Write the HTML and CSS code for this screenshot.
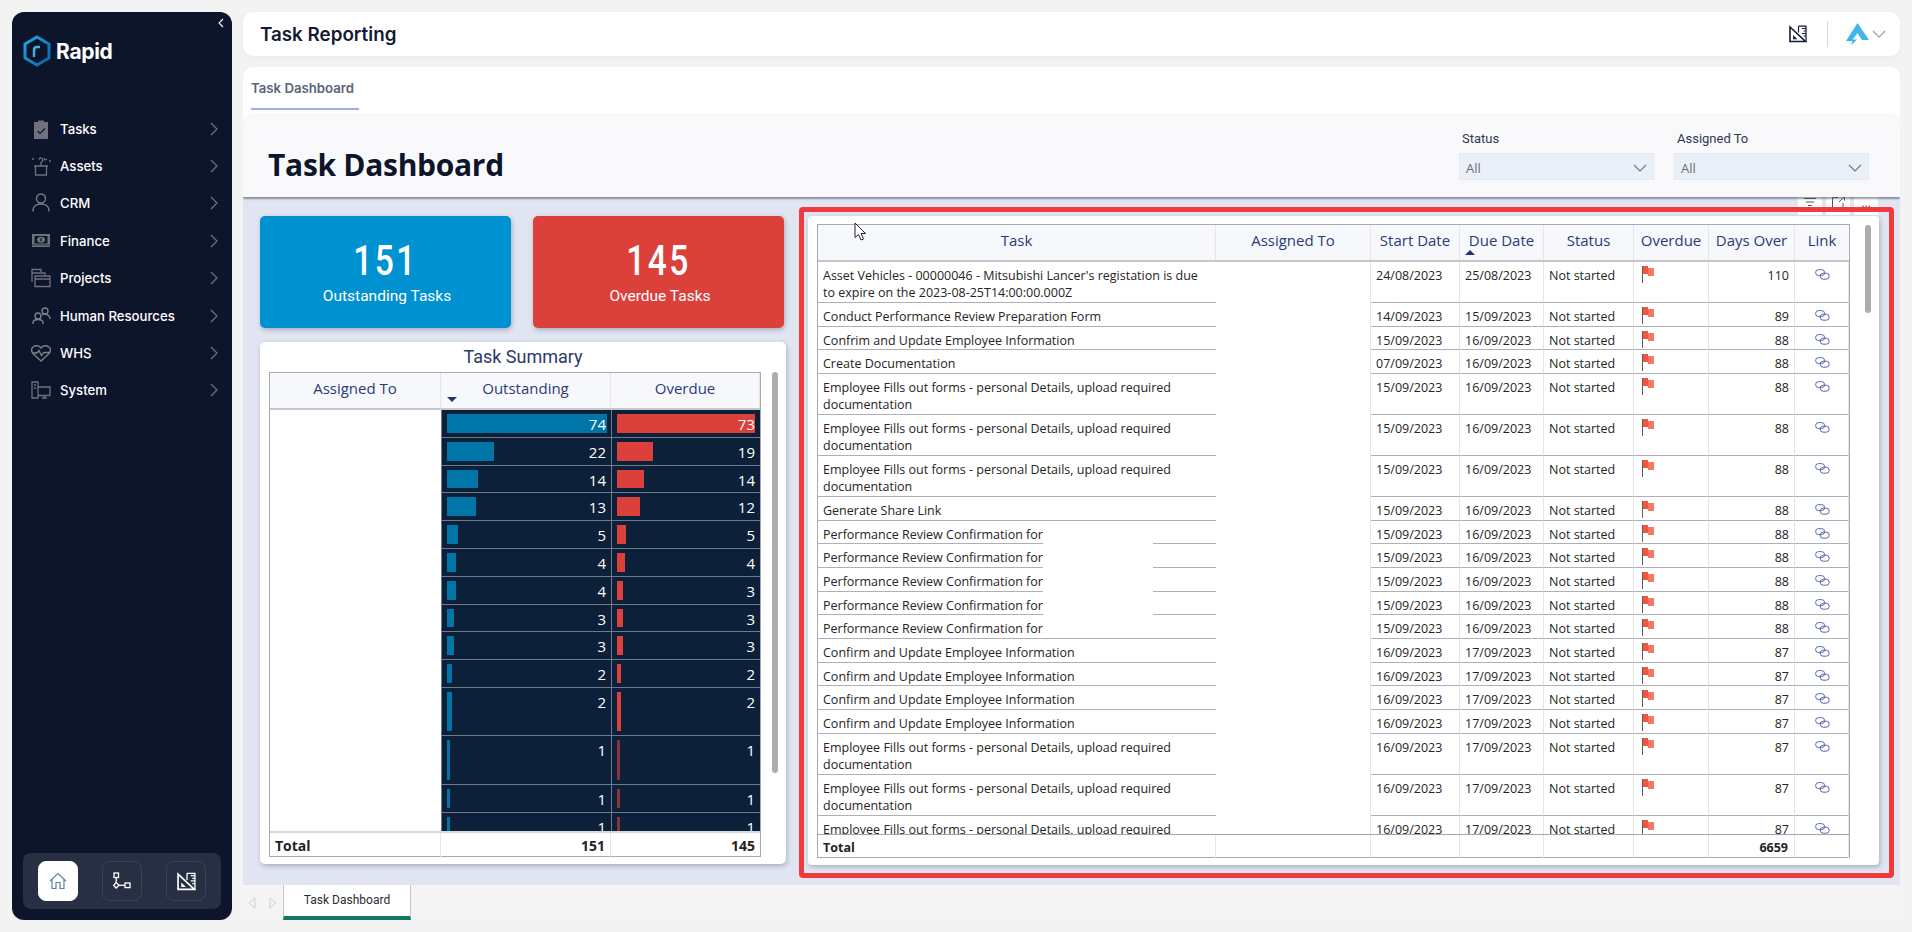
FILE: index.html
```html
<!DOCTYPE html>
<html lang="en">
<head>
    <meta charset="UTF-8">
    <meta name="viewport" content="width=device-width, initial-scale=1.0">
    <title>Task Reporting</title>
    <link rel="stylesheet" href="styles.css">
</head>
<body>

    <!-- Shared icons -->
    <svg class="defs" width="0" height="0">
        <symbol id="ruler" viewBox="0 0 18 18">
            <path d="M1 2 L16.5 16.5 H1 Z" fill="none" stroke="currentColor" stroke-width="1.6"/>
            <path d="M4 10 L8.5 14.3 H4 Z" fill="currentColor"/>
            <path d="M9.5 1.2 H17 V17 M9.5 1.2 V7.5 M13 3.5 h4 M14.5 6 h2.5 M13 8.5 h4 M14.5 11 h2.5" fill="none" stroke="currentColor" stroke-width="1.2"/>
        </symbol>
        <symbol id="flag" viewBox="0 0 12 17">
            <path d="M.5 0 V17" stroke="#5c5f66" stroke-width="1"/>
            <path d="M1 0 H6 V2 H12 V10 H6 V8 H1 Z" fill="#f4553f"/>
            <path d="M6 2 H12 V10 H6 Z" fill="#f8785f"/>
        </symbol>
        <symbol id="link" viewBox="0 0 15 11">
            <rect x=".6" y=".6" width="9" height="6" rx="3" fill="none" stroke="#4a57a3" stroke-width=".9"/>
            <rect x="5.2" y="4.2" width="9" height="6" rx="3" fill="none" stroke="#4a57a3" stroke-width=".9"/>
        </symbol>
        <symbol id="chevron" viewBox="0 0 8 14">
            <path d="M1 1 L7 7 L1 13" fill="none" stroke="currentColor" stroke-width="1.2"/>
        </symbol>
        <symbol id="caret" viewBox="0 0 14 8">
            <path d="M1 1 L7 7 L13 1" fill="none" stroke="currentColor" stroke-width="1.1"/>
        </symbol>
    </svg>

    <div class="app">

        <!-- Sidebar -->
        <aside class="sidebar">
            <svg class="collapse" width="6" height="10" viewBox="0 0 6 10"><path d="M5 1 L1 5 L5 9" fill="none" stroke="#fff" stroke-width="1.1"/></svg>
            <div class="brand">
                <svg width="28" height="32" viewBox="0 0 28 32">
                    <defs>
                        <linearGradient id="hex" x1="0" y1="0" x2="1" y2="1">
                            <stop offset="0" stop-color="#25a8e0"/>
                            <stop offset="1" stop-color="#0b62ae"/>
                        </linearGradient>
                    </defs>
                    <path d="M14 2 L26 9 V23 L14 30 L2 23 V9 Z" fill="none" stroke="url(#hex)" stroke-width="3"/>
                    <path d="M11 22 V15 Q11 12 14 12 H17" fill="none" stroke="#3cb4e6" stroke-width="2.4"/>
                </svg>
                <span>Rapid</span>
            </div>

            <nav class="menu">
                <a class="menu-item" href="#">
                    <svg class="menu-icon" viewBox="0 0 20 20"><path d="M3 3 H7 V1.5 H13 V3 H17 V20 H3 Z" fill="#6e727e"/><path d="M6.5 12 L9 14.5 L14 9.5" fill="none" stroke="#0d152b" stroke-width="1.2"/></svg>
                    <span>Tasks</span>
                    <svg class="menu-arrow"><use href="#chevron"/></svg>
                </a>
                <a class="menu-item" href="#">
                    <svg class="menu-icon" viewBox="0 0 20 20"><g fill="none" stroke="#6e727e" stroke-width="1.3"><path d="M3 10 H17 M4.5 10 V19 H15.5 V10"/><path d="M10 10 V6 M8 3.5 a2 2 0 1 1 2 2.5 M13 2 l1 2 2-1"/></g><path d="M1 3 h2 M18 5 h2" stroke="#6e727e" stroke-width="1.3"/></svg>
                    <span>Assets</span>
                    <svg class="menu-arrow"><use href="#chevron"/></svg>
                </a>
                <a class="menu-item" href="#">
                    <svg class="menu-icon" viewBox="0 0 20 20"><g fill="none" stroke="#7b7f8a" stroke-width="1.4"><circle cx="10" cy="5.5" r="4.5"/><path d="M2 18.5 V17 C2 13 6 11 10 11 S18 13 18 17 V18.5"/></g></svg>
                    <span>CRM</span>
                    <svg class="menu-arrow"><use href="#chevron"/></svg>
                </a>
                <a class="menu-item" href="#">
                    <svg class="menu-icon" viewBox="0 0 20 20"><path d="M1 3 H19 V16 H1 Z" fill="#6e727e"/><path d="M3.5 5 H16.5 V12.5 H3.5 Z" fill="#0d152b"/><ellipse cx="10" cy="8.7" rx="4" ry="3" fill="#6e727e"/><path d="M10 7 V10.5" stroke="#0d152b" stroke-width="1.2"/><path d="M1 14 H19" stroke="#0d152b" stroke-width=".7"/></svg>
                    <span>Finance</span>
                    <svg class="menu-arrow"><use href="#chevron"/></svg>
                </a>
                <a class="menu-item" href="#">
                    <svg class="menu-icon" viewBox="0 0 20 20"><g fill="none" stroke="#6e727e" stroke-width="1.3"><path d="M1 14 V1.5 H10 V4 M1 5 H14 V7"/><path d="M4 8 H19 V18.5 H4 Z M4 11 H19"/></g></svg>
                    <span>Projects</span>
                    <svg class="menu-arrow"><use href="#chevron"/></svg>
                </a>
                <a class="menu-item" href="#">
                    <svg class="menu-icon" viewBox="0 0 20 20"><g fill="none" stroke="#7b7f8a" stroke-width="1.4"><circle cx="14" cy="5" r="3"/><circle cx="7" cy="10" r="3"/><path d="M2 18 V17 C2 14.5 4 13.5 7 13.5 S12 14.5 12 17 V18"/><path d="M11 8.5 C12 8 16 8 18 10 C19 11 19 12 19 13"/></g></svg>
                    <span>Human Resources</span>
                    <svg class="menu-arrow"><use href="#chevron"/></svg>
                </a>
                <a class="menu-item" href="#">
                    <svg class="menu-icon" viewBox="0 0 20 20"><path d="M10 18 L2.5 11 C0 8.5 0 5.5 2 4 C4.500 2 8 2.500 10 5 C12 2.500 15.500 2 18 4 C20 5.500 20 8.500 17.500 11 Z" fill="none" stroke="#7b7f8a" stroke-width="1.4"/><path d="M1 10 H6 L8 7.500 L10.500 12.500 L13 9.500 H19" fill="none" stroke="#7b7f8a" stroke-width="1.4"/></svg>
                    <span>WHS</span>
                    <svg class="menu-arrow"><use href="#chevron"/></svg>
                </a>
                <a class="menu-item" href="#">
                    <svg class="menu-icon" viewBox="0 0 20 20"><g fill="none" stroke="#6e727e" stroke-width="1.3"><path d="M1 2 H7 V18 H1 Z M3 5 H5 M3 8 H5"/><path d="M7 7 H19 V15.500 H7 M11 18 H16 M13.500 15.500 V18"/></g></svg>
                    <span>System</span>
                    <svg class="menu-arrow"><use href="#chevron"/></svg>
                </a>
            </nav>

            <div class="dock">
                <button class="dock-btn active">
                    <svg width="18" height="18" viewBox="0 0 18 18"><path d="M1 9 L9 1.500 L17 9 M3 7.500 V16.500 H7 V10.500 H11 V16.500 H15 V7.500" fill="none" stroke="#5f7fa8" stroke-width="1.2"/></svg>
                </button>
                <button class="dock-btn">
                    <svg width="18" height="18" viewBox="0 0 18 18"><g fill="none" stroke="#fff" stroke-width="1.3"><rect x="1" y="1" width="4.500" height="4.500"/><path d="M3.200 5.500 V10.500"/><path d="M3.200 10.500 L6 13.300 L3.200 16 L.5 13.300 Z"/><path d="M6 13.300 H12"/><rect x="12" y="11" width="5" height="4.600"/></g></svg>
                </button>
                <button class="dock-btn">
                    <svg class="ruler-icon" width="19" height="19"><use href="#ruler"/></svg>
                </button>
            </div>
        </aside>

        <!-- Main column -->
        <div class="main">
            <header class="topbar">
                <h1>Task Reporting</h1>
                <div class="topbar-tools">
                    <svg class="top-ruler" width="18" height="18"><use href="#ruler"/></svg>
                    <span class="topbar-sep"></span>
                    <svg width="23" height="22" viewBox="0 0 23 22"><path d="M11.500 0 L23 17 H16 L11.500 10 L6.800 16.500 H11 L5.500 22 L6.300 18 H0 Z" fill="#3fb5e9"/></svg>
                    <svg class="top-caret" width="14" height="8"><use href="#caret"/></svg>
                </div>
            </header>

            <section class="panel">
                <div class="panel-tabs">
                    <a class="panel-tab" href="#">Task Dashboard</a>
                </div>

                <div class="report-head">
                    <h2>Task Dashboard</h2>
                    <div class="slicers">
                        <div class="slicer">
                            <label>Status</label>
                            <div class="slicer-box">All<svg width="14" height="8"><use href="#caret"/></svg></div>
                        </div>
                        <div class="slicer">
                            <label>Assigned To</label>
                            <div class="slicer-box">All<svg width="14" height="8"><use href="#caret"/></svg></div>
                        </div>
                    </div>
                </div>

                <div class="canvas">

                    <!-- Left column -->
                    <div class="left-col">
                        <div class="kpis">
                            <div class="kpi blue">
                                <div class="kpi-value">151</div>
                                <div class="kpi-label">Outstanding Tasks</div>
                            </div>
                            <div class="kpi red">
                                <div class="kpi-value">145</div>
                                <div class="kpi-label">Overdue Tasks</div>
                            </div>
                        </div>

                        <div class="summary">
                            <div class="summary-title">Task Summary</div>
                            <div class="summary-table">
                                <div class="sum-row sum-head">
                                    <div>Assigned To</div>
                                    <div>Outstanding<i class="sort-down"></i></div>
                                    <div>Overdue</div>
                                </div>
                                <div class="sum-body">
                                    <div class="sum-row"><div></div><div class="num"><i class="bar out" style="width:160px"></i><span>74</span></div><div class="num"><i class="bar over" style="width:138px"></i><span>73</span></div></div>
                                    <div class="sum-row"><div></div><div class="num"><i class="bar out" style="width:47px"></i><span>22</span></div><div class="num"><i class="bar over" style="width:36px"></i><span>19</span></div></div>
                                    <div class="sum-row"><div></div><div class="num"><i class="bar out" style="width:31px"></i><span>14</span></div><div class="num"><i class="bar over" style="width:27px"></i><span>14</span></div></div>
                                    <div class="sum-row"><div></div><div class="num"><i class="bar out" style="width:29px"></i><span>13</span></div><div class="num"><i class="bar over" style="width:23px"></i><span>12</span></div></div>
                                    <div class="sum-row"><div></div><div class="num"><i class="bar out" style="width:11px"></i><span>5</span></div><div class="num"><i class="bar over" style="width:9px"></i><span>5</span></div></div>
                                    <div class="sum-row"><div></div><div class="num"><i class="bar out" style="width:9px"></i><span>4</span></div><div class="num"><i class="bar over" style="width:8px"></i><span>4</span></div></div>
                                    <div class="sum-row"><div></div><div class="num"><i class="bar out" style="width:9px"></i><span>4</span></div><div class="num"><i class="bar over" style="width:6px"></i><span>3</span></div></div>
                                    <div class="sum-row"><div></div><div class="num"><i class="bar out" style="width:7px"></i><span>3</span></div><div class="num"><i class="bar over" style="width:6px"></i><span>3</span></div></div>
                                    <div class="sum-row"><div></div><div class="num"><i class="bar out" style="width:7px"></i><span>3</span></div><div class="num"><i class="bar over" style="width:6px"></i><span>3</span></div></div>
                                    <div class="sum-row"><div></div><div class="num"><i class="bar out" style="width:5px"></i><span>2</span></div><div class="num"><i class="bar over" style="width:4px"></i><span>2</span></div></div>
                                    <div class="sum-row tall"><div></div><div class="num"><i class="bar out" style="width:5px"></i><span>2</span></div><div class="num"><i class="bar over" style="width:4px"></i><span>2</span></div></div>
                                    <div class="sum-row tall"><div></div><div class="num"><i class="bar out" style="width:3px"></i><span>1</span></div><div class="num"><i class="bar over thin" style="width:3px"></i><span>1</span></div></div>
                                    <div class="sum-row"><div></div><div class="num"><i class="bar out" style="width:3px"></i><span>1</span></div><div class="num"><i class="bar over thin" style="width:3px"></i><span>1</span></div></div>
                                    <div class="sum-row"><div></div><div class="num"><i class="bar out" style="width:3px"></i><span>1</span></div><div class="num"><i class="bar over thin" style="width:3px"></i><span>1</span></div></div>
                                </div>
                                <div class="sum-row sum-total">
                                    <div>Total</div>
                                    <div>151</div>
                                    <div>145</div>
                                </div>
                            </div>
                            <div class="scroll-thumb sum-thumb"></div>
                        </div>
                    </div>

                    <!-- Right column, outlined in red -->
                    <div class="focus">
                        <div class="visual-tools">
                            <span><svg width="12" height="8" viewBox="0 0 12 8"><path d="M0 .5 H12 M2 4 H10 M4 7.500 H8" stroke="#555" stroke-width="1"/></svg></span>
                            <span><svg width="13" height="12" viewBox="0 0 13 12"><path d="M6 1.500 H.5 V11.500 H11 V7 M7 6 L12 1 M8.500 .5 H12.500 V4.500" fill="none" stroke="#555" stroke-width="1"/></svg></span>
                            <span class="dots">...</span>
                        </div>
                        <div class="task-card">
                            <div class="task-table">
                                <div class="task-row task-head">
                                    <div>Task</div>
                                    <div>Assigned To</div>
                                    <div>Start Date</div>
                                    <div>Due Date<i class="sort-up"></i></div>
                                    <div>Status</div>
                                    <div>Overdue</div>
                                    <div>Days Over</div>
                                    <div>Link</div>
                                </div>
                                <div class="task-body">
                                    <div class="task-row two"><div>Asset Vehicles - 00000046 - Mitsubishi Lancer's registation is due<br>to expire on the 2023-08-25T14:00:00.000Z</div><div class="blank"></div><div>24/08/2023</div><div>25/08/2023</div><div>Not started</div><div class="flag-cell"><svg class="flag"><use href="#flag"/></svg></div><div class="days">110</div><div class="link-cell"><svg class="link"><use href="#link"/></svg></div></div>
                                    <div class="task-row"><div>Conduct Performance Review Preparation Form</div><div class="blank"></div><div>14/09/2023</div><div>15/09/2023</div><div>Not started</div><div class="flag-cell"><svg class="flag"><use href="#flag"/></svg></div><div class="days">89</div><div class="link-cell"><svg class="link"><use href="#link"/></svg></div></div>
                                    <div class="task-row"><div>Confrim and Update Employee Information</div><div class="blank"></div><div>15/09/2023</div><div>16/09/2023</div><div>Not started</div><div class="flag-cell"><svg class="flag"><use href="#flag"/></svg></div><div class="days">88</div><div class="link-cell"><svg class="link"><use href="#link"/></svg></div></div>
                                    <div class="task-row"><div>Create Documentation</div><div class="blank"></div><div>07/09/2023</div><div>16/09/2023</div><div>Not started</div><div class="flag-cell"><svg class="flag"><use href="#flag"/></svg></div><div class="days">88</div><div class="link-cell"><svg class="link"><use href="#link"/></svg></div></div>
                                    <div class="task-row two"><div>Employee Fills out forms - personal Details, upload required<br>documentation</div><div class="blank"></div><div>15/09/2023</div><div>16/09/2023</div><div>Not started</div><div class="flag-cell"><svg class="flag"><use href="#flag"/></svg></div><div class="days">88</div><div class="link-cell"><svg class="link"><use href="#link"/></svg></div></div>
                                    <div class="task-row two"><div>Employee Fills out forms - personal Details, upload required<br>documentation</div><div class="blank"></div><div>15/09/2023</div><div>16/09/2023</div><div>Not started</div><div class="flag-cell"><svg class="flag"><use href="#flag"/></svg></div><div class="days">88</div><div class="link-cell"><svg class="link"><use href="#link"/></svg></div></div>
                                    <div class="task-row two"><div>Employee Fills out forms - personal Details, upload required<br>documentation</div><div class="blank"></div><div>15/09/2023</div><div>16/09/2023</div><div>Not started</div><div class="flag-cell"><svg class="flag"><use href="#flag"/></svg></div><div class="days">88</div><div class="link-cell"><svg class="link"><use href="#link"/></svg></div></div>
                                    <div class="task-row"><div>Generate Share Link</div><div class="blank"></div><div>15/09/2023</div><div>16/09/2023</div><div>Not started</div><div class="flag-cell"><svg class="flag"><use href="#flag"/></svg></div><div class="days">88</div><div class="link-cell"><svg class="link"><use href="#link"/></svg></div></div>
                                    <div class="task-row"><div class="masked">Performance Review Confirmation for<i class="mask"></i></div><div class="blank"></div><div>15/09/2023</div><div>16/09/2023</div><div>Not started</div><div class="flag-cell"><svg class="flag"><use href="#flag"/></svg></div><div class="days">88</div><div class="link-cell"><svg class="link"><use href="#link"/></svg></div></div>
                                    <div class="task-row"><div class="masked">Performance Review Confirmation for<i class="mask"></i></div><div class="blank"></div><div>15/09/2023</div><div>16/09/2023</div><div>Not started</div><div class="flag-cell"><svg class="flag"><use href="#flag"/></svg></div><div class="days">88</div><div class="link-cell"><svg class="link"><use href="#link"/></svg></div></div>
                                    <div class="task-row"><div class="masked">Performance Review Confirmation for<i class="mask"></i></div><div class="blank"></div><div>15/09/2023</div><div>16/09/2023</div><div>Not started</div><div class="flag-cell"><svg class="flag"><use href="#flag"/></svg></div><div class="days">88</div><div class="link-cell"><svg class="link"><use href="#link"/></svg></div></div>
                                    <div class="task-row"><div class="masked">Performance Review Confirmation for<i class="mask"></i></div><div class="blank"></div><div>15/09/2023</div><div>16/09/2023</div><div>Not started</div><div class="flag-cell"><svg class="flag"><use href="#flag"/></svg></div><div class="days">88</div><div class="link-cell"><svg class="link"><use href="#link"/></svg></div></div>
                                    <div class="task-row"><div>Performance Review Confirmation for</div><div class="blank"></div><div>15/09/2023</div><div>16/09/2023</div><div>Not started</div><div class="flag-cell"><svg class="flag"><use href="#flag"/></svg></div><div class="days">88</div><div class="link-cell"><svg class="link"><use href="#link"/></svg></div></div>
                                    <div class="task-row"><div>Confirm and Update Employee Information</div><div class="blank"></div><div>16/09/2023</div><div>17/09/2023</div><div>Not started</div><div class="flag-cell"><svg class="flag"><use href="#flag"/></svg></div><div class="days">87</div><div class="link-cell"><svg class="link"><use href="#link"/></svg></div></div>
                                    <div class="task-row"><div>Confirm and Update Employee Information</div><div class="blank"></div><div>16/09/2023</div><div>17/09/2023</div><div>Not started</div><div class="flag-cell"><svg class="flag"><use href="#flag"/></svg></div><div class="days">87</div><div class="link-cell"><svg class="link"><use href="#link"/></svg></div></div>
                                    <div class="task-row"><div>Confirm and Update Employee Information</div><div class="blank"></div><div>16/09/2023</div><div>17/09/2023</div><div>Not started</div><div class="flag-cell"><svg class="flag"><use href="#flag"/></svg></div><div class="days">87</div><div class="link-cell"><svg class="link"><use href="#link"/></svg></div></div>
                                    <div class="task-row"><div>Confirm and Update Employee Information</div><div class="blank"></div><div>16/09/2023</div><div>17/09/2023</div><div>Not started</div><div class="flag-cell"><svg class="flag"><use href="#flag"/></svg></div><div class="days">87</div><div class="link-cell"><svg class="link"><use href="#link"/></svg></div></div>
                                    <div class="task-row two"><div>Employee Fills out forms - personal Details, upload required<br>documentation</div><div class="blank"></div><div>16/09/2023</div><div>17/09/2023</div><div>Not started</div><div class="flag-cell"><svg class="flag"><use href="#flag"/></svg></div><div class="days">87</div><div class="link-cell"><svg class="link"><use href="#link"/></svg></div></div>
                                    <div class="task-row two"><div>Employee Fills out forms - personal Details, upload required<br>documentation</div><div class="blank"></div><div>16/09/2023</div><div>17/09/2023</div><div>Not started</div><div class="flag-cell"><svg class="flag"><use href="#flag"/></svg></div><div class="days">87</div><div class="link-cell"><svg class="link"><use href="#link"/></svg></div></div>
                                    <div class="task-row two"><div>Employee Fills out forms - personal Details, upload required<br>documentation</div><div class="blank"><i class="speck"></i></div><div>16/09/2023</div><div>17/09/2023</div><div>Not started</div><div class="flag-cell"><svg class="flag"><use href="#flag"/></svg></div><div class="days">87</div><div class="link-cell"><svg class="link"><use href="#link"/></svg></div></div>
                                </div>
                                <div class="task-row task-total">
                                    <div>Total</div><div></div><div></div><div></div><div></div><div></div><div class="days">6659</div><div></div>
                                </div>
                            </div>
                            <div class="scroll-thumb task-thumb"></div>
                            <svg class="cursor" width="13" height="19" viewBox="0 0 13 19"><path d="M1 1 V15.500 L4.500 12.500 L7 18 L9.500 17 L7 11.500 H11.500 Z" fill="#fff" stroke="#222" stroke-width="1"/></svg>
                        </div>
                    </div>

                </div>

                <!-- Page tabs -->
                <div class="page-tabs">
                    <svg class="page-arrow" width="8" height="12" viewBox="0 0 8 12"><path d="M7 1 L1 6 L7 11 Z" fill="none" stroke="#d0d0d0"/></svg>
                    <svg class="page-arrow" width="8" height="12" viewBox="0 0 8 12"><path d="M1 1 L7 6 L1 11 Z" fill="none" stroke="#d0d0d0"/></svg>
                    <div class="page-tab">Task Dashboard</div>
                </div>
            </section>
        </div>
    </div>

</body>
</html>
```

FILE: styles.css
```css
/* General Body Style */
body {
    font-family: "Open Sans", "Liberation Sans", sans-serif;
    background-color: #f3f3f3;
    margin: 0;
    color: #252423;
}

.defs {
    position: absolute;
}

.app {
    display: flex;
    gap: 11px;
    height: 100vh;
    padding: 12px;
    box-sizing: border-box;
}

/* Sidebar */
.sidebar {
    position: relative;
    width: 220px;
    flex: none;
    display: flex;
    flex-direction: column;
    background-color: #0d152b;
    border-radius: 12px;
    font-family: Inter, sans-serif;
}

.collapse {
    position: absolute;
    top: 6px;
    right: 8px;
}

.brand {
    display: flex;
    align-items: center;
    gap: 5px;
    padding: 23px 0 0 11px;
    color: #fff;
    font-size: 21px;
    font-weight: 700;
    letter-spacing: -0.3px;
}

.menu {
    display: flex;
    flex-direction: column;
    margin-top: 43px;
}

.menu-item {
    display: flex;
    align-items: center;
    height: 37.4px;
    padding: 0 14px 0 19px;
    color: #fff;
    font-size: 13.2px;
    font-weight: 500;
    text-decoration: none;
}

.menu-icon {
    width: 20px;
    height: 20px;
    margin-right: 9px;
}

.menu-arrow {
    width: 8px;
    height: 14px;
    margin-left: auto;
    color: #70747f;
}

.dock {
    display: flex;
    justify-content: space-between;
    margin: auto 11px 11px;
    padding: 8px 15px;
    background-color: #272f43;
    border-radius: 8px;
}

.dock-btn {
    display: flex;
    align-items: center;
    justify-content: center;
    width: 40px;
    height: 40px;
    padding: 0;
    background: none;
    border: 1px solid #3a4256;
    border-radius: 8px;
}

.dock-btn.active {
    background-color: #fff;
    border-color: #fff;
}

.ruler-icon {
    color: #fff;
}

/* Main Column */
.main {
    flex: 1;
    min-width: 0;
    display: flex;
    flex-direction: column;
    gap: 11px;
}

.topbar {
    display: flex;
    align-items: center;
    justify-content: space-between;
    height: 44px;
    flex: none;
    padding: 0 14px 0 17px;
    background-color: #fff;
    border-radius: 10px;
    box-shadow: 0 2px 6px rgba(0, 0, 0, 0.04);
}

.topbar h1 {
    margin: 0;
    font-family: Inter, sans-serif;
    font-size: 18.8px;
    font-weight: 600;
    color: #141b33;
}

.topbar-tools {
    display: flex;
    align-items: center;
}

.top-ruler {
    color: #141b33;
}

.topbar-sep {
    width: 1px;
    height: 26px;
    margin: 0 18px 0 20px;
    background-color: #d8d8d8;
}

.top-caret {
    margin-left: 3px;
    color: #9a9ea6;
}

.panel {
    flex: 1;
    min-height: 0;
    display: flex;
    flex-direction: column;
    background-color: #fff;
    border-radius: 10px;
    overflow: hidden;
}

.panel-tabs {
    height: 46px;
    flex: none;
    padding-left: 8px;
    box-sizing: border-box;
}

.panel-tab {
    display: inline-block;
    width: 108px;
    height: 43px;
    box-sizing: border-box;
    padding-top: 14px;
    border-bottom: 2px solid #9db0dd;
    font-family: Inter, sans-serif;
    font-size: 13.2px;
    font-weight: 600;
    line-height: 15px;
    color: #5b6478;
    text-decoration: none;
    white-space: nowrap;
}

/* Report Header */
.report-head {
    position: relative;
    z-index: 1;
    display: flex;
    justify-content: space-between;
    height: 84px;
    flex: none;
    padding: 16px 31px 0 25px;
    box-sizing: border-box;
    background-color: #f9f9fc;
    border-radius: 12px 12px 0 0;
    box-shadow: 0 2px 2px rgba(70, 75, 90, 0.55);
}

.report-head h2 {
    margin: 14px 0 0;
    font-size: 30px;
    font-weight: 700;
    line-height: 44px;
    color: #0d152b;
    letter-spacing: -0.3px;
}

.slicers {
    display: flex;
    gap: 20px;
}

.slicer {
    width: 195px;
}

.slicer label {
    display: block;
    height: 18px;
    margin-bottom: 6px;
    padding-left: 3px;
    font-family: Roboto, sans-serif;
    font-size: 13px;
    line-height: 20px;
    color: #2f3850;
}

.slicer-box {
    display: flex;
    align-items: center;
    justify-content: space-between;
    height: 27px;
    padding: 2px 6px 0;
    box-sizing: border-box;
    background-color: #eaf0f8;
    border: 1px solid #e3e9f1;
    font-size: 13px;
    color: #6c6c70;
}

.slicer-box svg {
    color: #6f7680;
}

/* Canvas */
.canvas {
    flex: 1;
    min-height: 0;
    display: flex;
    gap: 13px;
    padding: 10px 6px 7px 17px;
    background-color: #e1e5f1;
}

.left-col {
    width: 526px;
    flex: none;
    padding-top: 9px;
}

.kpis {
    display: flex;
    gap: 22px;
    margin-bottom: 14px;
}

.kpi {
    width: 251px;
    height: 112px;
    box-sizing: border-box;
    padding-top: 21px;
    border-radius: 5px;
    color: #fff;
    text-align: center;
    box-shadow: 1px 2px 5px rgba(40, 50, 80, 0.3);
}

.kpi.blue {
    background-color: #0091d1;
}

.kpi.red {
    background-color: #dc403b;
}

/* Digits in the reference are condensed, no narrow family is installed */
.kpi-value {
    font-family: Roboto, sans-serif;
    font-size: 42px;
    font-weight: 500;
    line-height: 48px;
    letter-spacing: 3px;
    transform: scaleX(0.8);
}

.kpi-label {
    margin-top: 1px;
    padding-left: 3px;
    font-family: Roboto, sans-serif;
    font-size: 15.5px;
    line-height: 20px;
}

/* Task Summary */
.summary {
    position: relative;
    height: 522px;
    padding: 0 25px 0 9px;
    box-sizing: border-box;
    background-color: #fff;
    border-radius: 5px;
    box-shadow: 1px 2px 5px rgba(40, 50, 80, 0.3);
}

.summary-title {
    height: 30px;
    padding-left: 16px;
    font-family: Roboto, sans-serif;
    font-size: 18px;
    line-height: 29px;
    text-align: center;
    color: #2b3a67;
}

.summary-table {
    width: 492px;
    height: 485px;
    box-sizing: border-box;
    border: 1px solid #a9abb3;
}

.sum-row {
    display: grid;
    grid-template-columns: 171px 170px 149px;
    grid-template-rows: minmax(0, 1fr);
    height: 27.8px;
}

.sum-row.tall {
    height: 48.5px;
}

.sum-head {
    box-sizing: border-box;
    height: 37px;
    background-color: #f7f8fc;
    border-bottom: 2px solid #c6c7cd;
    font-size: 15px;
    color: #2c3a78;
    text-align: center;
}

.sum-head > div {
    position: relative;
    padding-top: 5px;
    line-height: 20px;
    border-right: 1px solid #e6e6ea;
}

.sum-body {
    height: 421px;
    overflow: hidden;
}

.num {
    position: relative;
    box-sizing: border-box;
    padding-right: 5px;
    background-color: #0c2139;
    border-bottom: 1px solid #6f7a8a;
    border-left: 1px solid #6f7a8a;
    font-size: 15px;
    line-height: 29px;
    color: #fff;
    text-align: right;
}

.num span {
    position: relative;
}

.bar {
    position: absolute;
    top: 4px;
    bottom: 4px;
    left: 5px;
}

.bar.out {
    background-color: #0075a8;
}

.bar.over {
    background-color: #db403a;
}

.bar.thin {
    opacity: 0.6;
}

.sum-total {
    height: 27px;
    box-sizing: border-box;
    border-top: 2px solid #d8d8dc;
    font-size: 14px;
    font-weight: 700;
    line-height: 25px;
    text-align: right;
}

.sum-total > div {
    padding: 0 5px;
    border-right: 1px solid #e6e6ea;
}

.sum-total > div:first-child {
    text-align: left;
}

.sum-total > div:last-child {
    border-right: none;
}

.sort-down,
.sort-up {
    position: absolute;
    width: 0;
    height: 0;
    border-left: 5px solid transparent;
    border-right: 5px solid transparent;
}

.sort-down {
    left: 6px;
    top: 24px;
    border-top: 5px solid #26346e;
}

.sort-up {
    left: 5px;
    top: 25px;
    border-bottom: 5px solid #26346e;
}

.scroll-thumb {
    position: absolute;
    width: 6px;
    background-color: #adadad;
    border-radius: 3px;
}

.sum-thumb {
    top: 30px;
    right: 8px;
    height: 401px;
}

/* Task Table */
.focus {
    position: relative;
    flex: 1;
    min-width: 0;
    padding: 9px 15px 13px 9px;
    box-sizing: border-box;
}

.focus::after {
    content: "";
    position: absolute;
    top: 0;
    right: 0;
    bottom: 0;
    left: 0;
    border: 5px solid #f03a3c;
    border-radius: 4px;
    pointer-events: none;
}

.visual-tools {
    position: absolute;
    top: -15px;
    right: 16px;
    display: flex;
    gap: 4px;
}

.visual-tools span {
    display: flex;
    align-items: center;
    justify-content: center;
    width: 24px;
    height: 23px;
    padding-bottom: 3px;
    box-sizing: border-box;
    background-color: #fff;
    font-size: 12px;
    color: #555;
}

.task-card {
    position: relative;
    height: 100%;
    padding: 8px 0 0 9px;
    box-sizing: border-box;
    background-color: #fff;
    border-radius: 4px;
    box-shadow: 1px 2px 5px rgba(40, 50, 80, 0.3);
}

.task-table {
    width: 1033px;
    height: 634px;
    box-sizing: border-box;
    border: 1px solid #a9abb3;
}

.task-row {
    display: grid;
    grid-template-columns: 398px 155px 89px 84px 90px 75px 86px 54px;
    grid-template-rows: minmax(0, 1fr);
    height: 23.67px;
    font-size: 12.5px;
    line-height: 17px;
}

.task-row.two {
    height: 41px;
}

.task-body .task-row > div {
    position: relative;
    padding: 5px 5px 0;
    border-bottom: 1px solid #aeafb9;
    border-right: 1px solid #e6e6e8;
    box-sizing: border-box;
    white-space: nowrap;
}

.task-body .task-row > div:first-child {
    border-right: none;
}

.task-body .task-row > .blank {
    border-bottom: none;
}

.task-body {
    height: 572px;
    overflow: hidden;
}

.mask {
    position: absolute;
    top: 0;
    left: 225px;
    bottom: -1px;
    width: 110px;
    background-color: #fff;
}

.speck {
    position: absolute;
    top: 18px;
    left: 49px;
    width: 1px;
    height: 1px;
    background-color: #555;
}

.task-head {
    height: 37px;
    box-sizing: border-box;
    background-color: #f7f8fc;
    border-bottom: 2px solid #c6c7cd;
    font-size: 15px;
    color: #2c3a78;
    text-align: center;
}

.task-head > div {
    position: relative;
    padding-top: 5px;
    line-height: 20px;
    border-right: 1px solid #e6e6ea;
}

.task-head > div:last-child {
    border-right: none;
}

.task-body .task-row > .days,
.task-total .days {
    text-align: right;
}

.task-body .task-row > .flag-cell {
    padding: 4px 0 0 8px;
}

.flag {
    display: block;
    width: 12px;
    height: 17px;
}

.link {
    display: block;
    width: 15px;
    height: 11px;
    margin: 2px 0 0 15px;
}

.task-total {
    height: 24px;
    box-sizing: border-box;
    border-top: 1px solid #a3a4ae;
    font-weight: 700;
    line-height: 25px;
}

.task-total > div {
    padding: 0 5px;
    box-sizing: border-box;
    border-right: 1px solid #e6e6e8;
}

.task-total .days {
    padding-right: 6px;
}

.task-thumb {
    top: 9px;
    left: 1057px;
    height: 88px;
}

.cursor {
    position: absolute;
    top: 6px;
    left: 46px;
}

/* Page Tabs */
.page-tabs {
    display: flex;
    align-items: center;
    height: 35px;
    flex: none;
    padding-left: 5px;
    box-sizing: border-box;
    background-color: #f4f4f4;
}

.page-arrow {
    margin-right: 13px;
}

.page-arrow + .page-arrow {
    margin-right: 6px;
}

.page-tab {
    width: 128px;
    height: 35px;
    box-sizing: border-box;
    background-color: #fff;
    border-left: 1px solid #c6c6c6;
    border-right: 1px solid #c6c6c6;
    border-bottom: 4px solid #117865;
    font-family: Roboto, sans-serif;
    font-size: 12px;
    line-height: 31px;
    text-align: center;
    color: #2b2b33;
}
```
